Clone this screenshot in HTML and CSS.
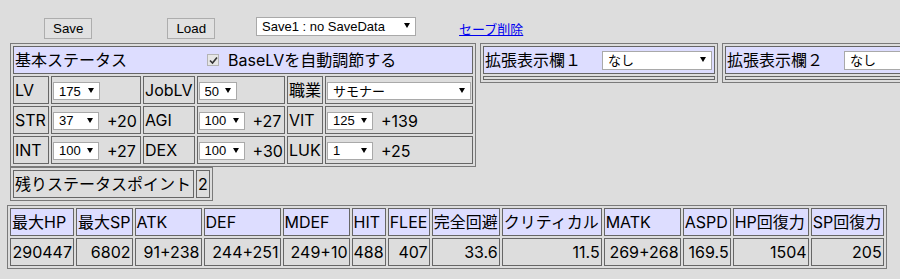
FILE: index.html
```html
<!DOCTYPE html>
<html lang="ja">
<head>
    <meta charset="UTF-8">
    <meta name="viewport" content="width=device-width, initial-scale=1.0">
    <title>ステータス計算</title>
    <link rel="stylesheet" href="styles.css">
</head>
<body>

    <!-- セーブ・ロード -->
    <div class="savebar">
        <button class="btn btn-save">Save</button>
        <button class="btn btn-load">Load</button>
        <span class="sel sel-save">
            <select>
                <option>Save1 : no SaveData</option>
                <option>Save2 : no SaveData</option>
                <option>Save3 : no SaveData</option>
            </select>
        </span>
        <a href="#" class="del">セーブ削除</a>
    </div>

    <div class="layout">
        <!-- 左: 基本ステータス -->
        <div class="left">
            <table class="box status">
                <tr>
                    <td colspan="6" class="head">
                        <div class="headin">
                            <span>基本ステータス</span>
                            <label class="auto">
                                <span class="chk">
                                    <svg width="9" height="9" viewBox="0 0 9 9"><path d="M1 4.5 L3.5 7 L8 1.5" fill="none" stroke="#333" stroke-width="1.6"/></svg>
                                </span>BaseLVを自動調節する
                            </label>
                        </div>
                    </td>
                </tr>
                <tr>
                    <td class="c1">LV</td>
                    <td class="c2"><span class="sel sel-lv"><select><option>174</option><option selected>175</option></select></span></td>
                    <td class="c3">JobLV</td>
                    <td class="c4"><span class="sel sel-job"><select><option>49</option><option selected>50</option></select></span></td>
                    <td class="c5">職業</td>
                    <td class="c6"><span class="sel sel-class"><select><option>サモナー</option></select></span></td>
                </tr>
                <tr>
                    <td>STR</td>
                    <td><span class="sel sel-stat"><select><option>37</option></select></span><span class="bonus">+20</span></td>
                    <td>AGI</td>
                    <td><span class="sel sel-stat"><select><option>100</option></select></span><span class="bonus">+27</span></td>
                    <td>VIT</td>
                    <td><span class="sel sel-stat"><select><option>125</option></select></span><span class="bonus">+139</span></td>
                </tr>
                <tr>
                    <td>INT</td>
                    <td><span class="sel sel-stat"><select><option>100</option></select></span><span class="bonus">+27</span></td>
                    <td>DEX</td>
                    <td><span class="sel sel-stat"><select><option>100</option></select></span><span class="bonus">+30</span></td>
                    <td>LUK</td>
                    <td><span class="sel sel-stat"><select><option>1</option></select></span><span class="bonus">+25</span></td>
                </tr>
            </table>

            <table class="box points">
                <tr>
                    <td class="pt-lbl">残りステータスポイント</td>
                    <td class="pt-val">2</td>
                </tr>
            </table>
        </div>

        <!-- 拡張表示欄 -->
        <table class="box ext">
            <tr>
                <td class="head">
                    <div class="extin">
                        <span>拡張表示欄１</span>
                        <span class="sel sel-ext"><select><option>なし</option></select></span>
                    </div>
                </td>
            </tr>
            <tr><td class="blank"></td></tr>
        </table>

        <table class="box ext">
            <tr>
                <td class="head">
                    <div class="extin">
                        <span>拡張表示欄２</span>
                        <span class="sel sel-ext"><select><option>なし</option></select></span>
                    </div>
                </td>
            </tr>
            <tr><td class="blank"></td></tr>
        </table>
    </div>

    <!-- 計算結果 -->
    <table class="box stats">
        <tr class="hrow">
            <td class="w-hp">最大HP</td>
            <td class="w-sp">最大SP</td>
            <td class="w-atk">ATK</td>
            <td class="w-def">DEF</td>
            <td class="w-mdef">MDEF</td>
            <td class="w-hit">HIT</td>
            <td class="w-flee">FLEE</td>
            <td class="w-pd">完全回避</td>
            <td class="w-cri">クリティカル</td>
            <td class="w-matk">MATK</td>
            <td class="w-aspd">ASPD</td>
            <td class="w-hpr">HP回復力</td>
            <td class="w-spr">SP回復力</td>
        </tr>
        <tr class="vrow">
            <td>290447</td>
            <td>6802</td>
            <td>91+238</td>
            <td>244+251</td>
            <td>249+10</td>
            <td>488</td>
            <td>407</td>
            <td>33.6</td>
            <td>11.5</td>
            <td>269+268</td>
            <td>169.5</td>
            <td>1504</td>
            <td>205</td>
        </tr>
    </table>

</body>
</html>
```

FILE: styles.css
```css
html,body{
    margin: 0;
    padding: 0;
}
body{
    padding: 0 7px;
    background-color: #ddd;
    color: #000;
    font-family: Inter, "Noto Sans CJK JP", sans-serif;
    font-size: 16px;
    overflow-x: hidden;
}

/* セーブ欄 */
.savebar{
    display: flex;
    align-items: flex-start;
    height: 26px;
    padding-top: 17px;
}
.btn{
    margin: 1px 0 0;
    height: 21px;
    padding: 0 8px;
    border: 1px solid #adadad;
    background-color: #e1e1e1;
    color: #000;
    font: 13.33px "Liberation Sans", sans-serif;
}
.btn-save{ margin-left: 37px; }
.btn-load{ margin-left: 75px; }
.sel-save{ margin-left: 41px; }
.del{
    margin: 4px 0 0 43px;
    color: #00e;
    font: 13px/15px "Noto Sans CJK JP", sans-serif;
}

/* セレクトボックス (矢印は::afterで) */
.sel{
    position: relative;
    display: inline-block;
    vertical-align: middle;
}
.sel select{
    -webkit-appearance: none;
    appearance: none;
    display: block;
    box-sizing: border-box;
    height: 18px;
    margin: 0;
    padding: 0 0 0 5px;
    border: 1px solid #a9a9a9;
    border-radius: 0;
    background-color: #fff;
    color: #000;
    font: 13px "Liberation Sans", "Noto Sans CJK JP", sans-serif;
}
.sel::after{
    content: "";
    position: absolute;
    right: 6px;
    top: 6px;
    border-left: 3px solid transparent;
    border-right: 3px solid transparent;
    border-top: 5px solid #000;
    pointer-events: none;
}
.sel-save select{ width: 160px; height: 19px; }
.sel-lv select{ width: 47px; }
.sel-job select{ width: 38px; }
.sel-class select{ width: 144px; }
.sel-stat select{ width: 46px; }
.sel-ext select{ width: 110px; height: 19px; }

/* 枠付きテーブル */
.layout{
    display: flex;
    align-items: flex-start;
    gap: 4px;
    padding-left: 3px;
}
.layout > *{
    flex: none;
}
table.box{
    border-collapse: separate;
    border-spacing: 2px;
    border: 1px solid #7a7a7a;
}
.box td{
    box-sizing: border-box;
    height: 28px;
    padding: 0 1px;
    border: 1px solid #666;
    line-height: 20px;
    white-space: nowrap;
}
.box td.head{
    background-color: #ddf;
}

/* 基本ステータス */
.headin{
    display: flex;
    align-items: center;
}
.auto{
    display: flex;
    align-items: center;
    margin-left: 80px;
}
.chk{
    display: flex;
    align-items: center;
    justify-content: center;
    box-sizing: border-box;
    width: 12px;
    height: 12px;
    margin-right: 9px;
    border: 1px solid #b4b4b4;
    background-color: #e6e6e6;
}
.c1{ width: 36px; }
.c2{ width: 90px; }
.c3{ width: 50px; }
.c4{ width: 88px; }
.c5{ width: 36px; }
.c6{ width: 148px; }
.bonus{
    margin-left: 8px;
    vertical-align: middle;
}

/* 残りポイント */
.pt-lbl{ width: 181px; }
.pt-val{ width: 12px; }

/* 拡張表示欄 */
.ext td.head{
    width: 232px;
}
.extin{
    display: flex;
    align-items: center;
    justify-content: space-between;
    padding-right: 1px;
}
.box td.blank{
    height: 4px;
    padding: 0;
    line-height: 0;
    font-size: 0;
}

/* 計算結果 */
.stats{
    margin-top: 4px;
}
.hrow td{
    background-color: #ddf;
}
.vrow td{
    text-align: right;
}
.w-hp{ width: 64px; }
.w-sp{ width: 56px; }
.w-atk{ width: 67px; }
.w-def{ width: 77px; }
.w-mdef{ width: 67px; }
.w-hit{ width: 34px; }
.w-flee{ width: 42px; }
.w-pd{ width: 68px; }
.w-cri{ width: 100px; }
.w-matk{ width: 77px; }
.w-aspd{ width: 48px; }
.w-hpr{ width: 76px; }
.w-spr{ width: 73px; }
```
